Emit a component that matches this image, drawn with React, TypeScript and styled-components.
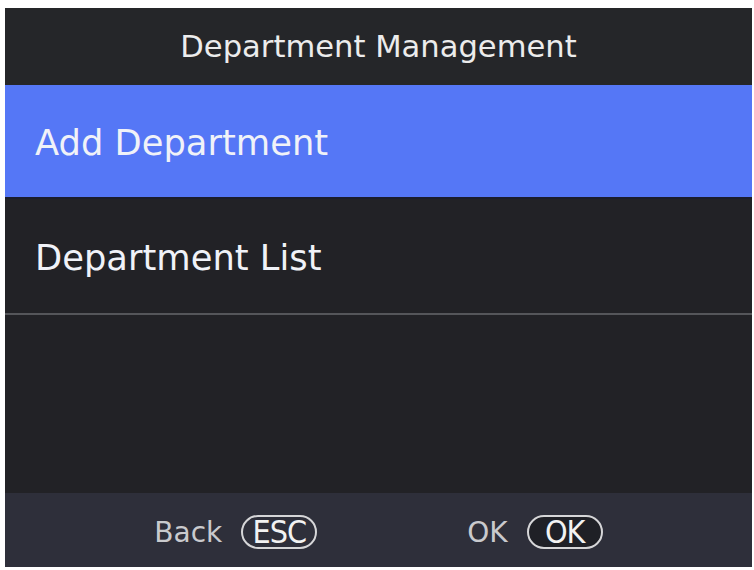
import styled, { createGlobalStyle } from 'styled-components';

const GlobalStyle = createGlobalStyle`
  html, body {
    margin: 0;
    padding: 0;
    background: #ffffff;
  }
  body {
    font-family: 'DejaVu Sans', 'Liberation Sans', sans-serif;
  }
`;

const menuItems = [
  { label: 'Add Department', active: true },
  { label: 'Department List', active: false },
];

export default function App() {
  return (
    <>
      <GlobalStyle />
      <Page>
        <Screen>
          <Header>Department Management</Header>
          <Menu>
            {menuItems.map((item) => (
              <MenuItem key={item.label} $active={item.active}>
                {item.label}
              </MenuItem>
            ))}
          </Menu>
          <Footer>
            <Hint>
              Back <Key>ESC</Key>
            </Hint>
            <Hint>
              OK <Key $dark>OK</Key>
            </Hint>
          </Footer>
        </Screen>
      </Page>
    </>
  );
}

const Page = styled.div`
  width: 754px;
  height: 570px;
  padding: 8px 2px 3px 5px;
  box-sizing: border-box;
`;

const Screen = styled.div`
  display: flex;
  flex-direction: column;
  height: 100%;

  background-color: #222226;
`;

const Header = styled.div`
  display: flex;
  align-items: center;
  justify-content: center;
  height: 77px;

  background-color: #252629;

  color: #ececec;
  font-size: 30.6px;
`;

const Menu = styled.div`
  display: flex;
  flex: 1;
  flex-direction: column;
`;

const MenuItem = styled.div<{ $active: boolean }>`
  display: flex;
  align-items: center;
  box-sizing: border-box;
  height: ${({ $active }) => ($active ? '114px' : '116px')};
  padding: 3px 0 0 30px;
  border-bottom: 2px solid ${({ $active }) => ($active ? '#1b1d2c' : '#55565a')};

  background-color: ${({ $active }) => ($active ? '#5577f6' : 'transparent')};

  color: #f0f2f8;
  font-size: 35.3px;
`;

const Footer = styled.div`
  display: flex;
  align-items: center;
  justify-content: center;
  gap: 150px;
  height: 74px;
  padding-top: 4px;
  box-sizing: border-box;

  background-color: #2e2f3a;
`;

const Hint = styled.div`
  display: flex;
  align-items: center;
  gap: 19px;

  color: #c9cacd;
  font-size: 28px;
`;

const Key = styled.span<{ $dark?: boolean }>`
  display: inline-flex;
  align-items: center;
  justify-content: center;
  box-sizing: border-box;
  width: 76px;
  height: 34px;
  border: 2px solid #d6d6d8;
  border-radius: 17px;

  background-color: ${({ $dark }) => ($dark ? '#1f2026' : 'transparent')};

  color: #f2f2f2;
  font-family: 'DejaVu Sans Condensed', 'DejaVu Sans', sans-serif;
  font-size: 32px;
  letter-spacing: -1px;
`;
